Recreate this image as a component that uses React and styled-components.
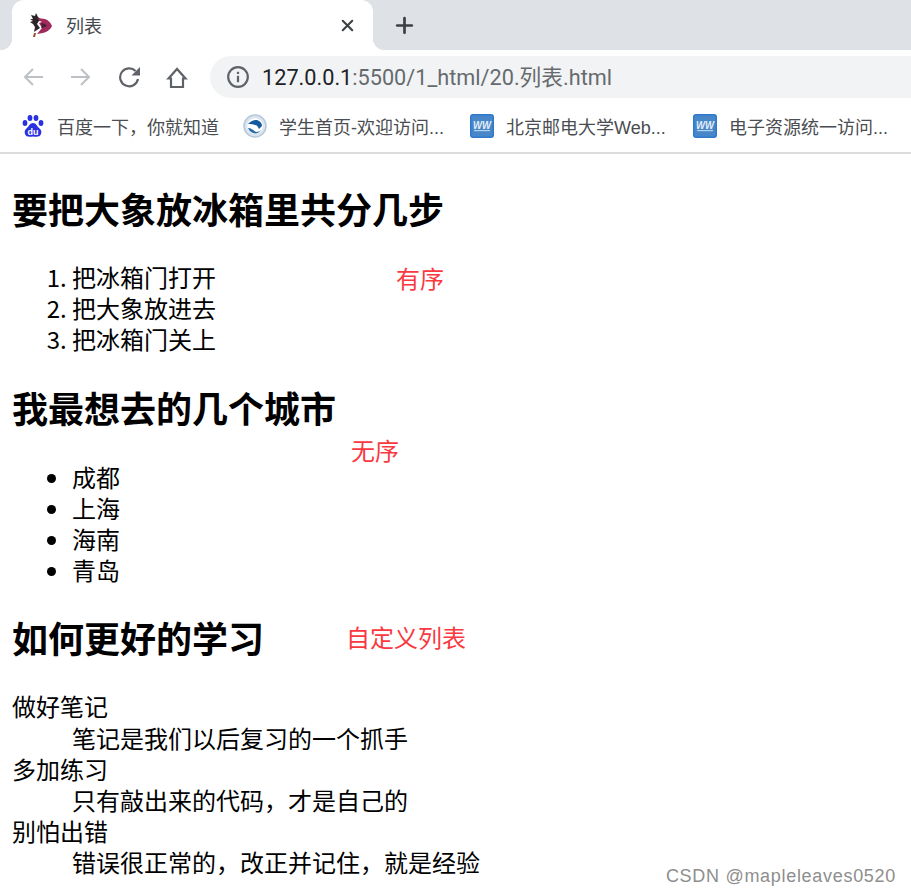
import React from "react";
import styled, { createGlobalStyle } from "styled-components";
import { X, Plus } from "lucide-react";

const Global = createGlobalStyle`
  html, body {
    margin: 0;
    padding: 0;
    background: #fff;
  }
  body {
    font-family: "Liberation Sans", "Noto Sans CJK SC", sans-serif;
    overflow: hidden;
  }
`;

const Page = styled.div`
  width: 911px;
  height: 895px;
  position: relative;
  overflow: hidden;
`;

const TabStrip = styled.div`
  height: 50px;
  background: #dee1e6;
  display: flex;
  align-items: flex-end;
  padding-left: 12px;
`;

const Tab = styled.div`
  width: 361px;
  height: 50px;
  background: #fff;
  border-radius: 12px 12px 0 0;
  display: flex;
  align-items: center;
  padding: 0 16px 0 18px;
  box-sizing: border-box;
  position: relative;
  color: #3c4043;
  &::before, &::after {
    content: "";
    position: absolute;
    bottom: 0;
    width: 12px;
    height: 12px;
  }
  &::before {
    left: -12px;
    background: radial-gradient(circle at 0 0, #dee1e6 12px, #fff 12.5px);
  }
  &::after {
    right: -12px;
    background: radial-gradient(circle at 100% 0, #dee1e6 12px, #fff 12.5px);
  }
`;

const TabTitle = styled.span`
  font-size: 18px;
  margin-left: 14px;
  flex: 1;
  color: #45494d;
`;

const NewTab = styled.div`
  margin-left: 19px;
  height: 50px;
  display: flex;
  align-items: center;
  color: #3c4043;
`;

const Toolbar = styled.div`
  height: 54px;
  display: flex;
  align-items: center;
  padding-left: 21px;
  box-sizing: border-box;
  background: #fff;
`;

const NavButton = styled.div`
  width: 24px;
  height: 24px;
  margin-right: ${(p) => p.$gap}px;
  display: flex;
  align-items: center;
  justify-content: center;
  color: ${(p) => (p.$off ? "#bdc1c6" : "#5f6368")};
`;

const Omnibox = styled.div`
  flex: 1;
  height: 42px;
  background: #f1f3f4;
  border-radius: 21px 0 0 21px;
  display: flex;
  align-items: center;
  padding-left: 17px;
  color: #5f6368;
`;

const Url = styled.div`
  margin-left: 13px;
  padding-bottom: 3px;
  font-family: "Roboto", "Noto Sans CJK SC", sans-serif;
  font-size: 21.7px;
  color: #666a6e;
  b {
    font-weight: 400;
    color: #202124;
  }
`;

const Bookmarks = styled.div`
  height: 50px;
  display: flex;
  align-items: center;
  padding: 0 0 4px 22px;
  box-sizing: border-box;
  border-bottom: 2px solid #dcdcdc;
`;

const Bookmark = styled.div`
  width: ${(p) => p.$w}px;
  display: flex;
  align-items: center;
  flex-shrink: 0;
  font-size: 18px;
  color: #4a4d51;
  white-space: nowrap;
  span {
    margin-left: ${(p) => p.$text}px;
  }
`;

const Content = styled.main`
  padding: 0 12px;
  color: #000;
  font-family: "Noto Sans CJK SC", sans-serif;
  font-size: 24px;
  line-height: 31.2px;
`;

const Heading = styled.h1`
  font-size: 36px;
  font-weight: 700;
  line-height: 48px;
  margin: 0;
  padding-top: ${(p) => p.$top}px;
`;

const OrderedList = styled.ol`
  margin: 29px 0 0;
  padding-left: 60px;
`;

const BulletList = styled.ul`
  margin: 30px 0 0;
  padding-left: 60px;
`;

const DefinitionList = styled.dl`
  margin: 29px 0 0;
`;

const Term = styled.dt``;

const Detail = styled.dd`
  margin-left: 60px;
`;

const Note = styled.div`
  position: absolute;
  left: ${(p) => p.$x}px;
  top: ${(p) => p.$y}px;
  color: #f9393f;
  font-family: "Noto Sans CJK SC", sans-serif;
  font-size: 24px;
  line-height: 32px;
`;

const Watermark = styled.div`
  position: absolute;
  right: 15px;
  top: 866px;
  font-family: "Liberation Sans", sans-serif;
  font-size: 18px;
  line-height: 20px;
  color: #8e8e8e;
  letter-spacing: 0.7px;
`;

function TabLogo() {
  return (
    <svg width="22" height="24" viewBox="0 0 22 24">
      <path d="M1 2l4 1 1-3 2 4 4 3-3 1-2 3 3 4-6 4 1-5-2-3-3-2 3-1-3-2 3 0z" fill="#2b2327" />
      <path d="M7 5l8 1c3 1 6 4 7 7-1 3-5 6-9 7l-6 1 5-6-3-5 3-1-2-1z" fill="#a02a5c" />
      <path d="M11 10c2 0 5 1 6 3-2 1-4 2-6 2l1-2z" fill="#4a1f3a" />
      <path d="M4 20l2 0-1 4-2 0z" fill="#9a4a28" />
    </svg>
  );
}

function BackArrow() {
  return (
    <svg width="20" height="18" viewBox="0 0 20 18" fill="none" stroke="currentColor" strokeWidth="2">
      <path d="M20 9H2M10 1L2 9l8 8" />
    </svg>
  );
}

function ForwardArrow() {
  return (
    <svg width="20" height="18" viewBox="0 0 20 18" fill="none" stroke="currentColor" strokeWidth="2">
      <path d="M0 9h18M10 1l8 8-8 8" />
    </svg>
  );
}

function ReloadIcon() {
  return (
    <svg width="22" height="22" viewBox="0 0 22 22">
      <path d="M17.600 5A9 9 0 1 0 20 13" fill="none" stroke="currentColor" strokeWidth="2.200" />
      <path d="M13.500 9.500H22V1z" fill="currentColor" />
    </svg>
  );
}

function HomeIcon() {
  return (
    <svg width="22" height="21" viewBox="0 0 22 21" fill="none" stroke="currentColor" strokeWidth="2.2">
      <path d="M2.500 11.500L11 2l8.500 9.500H17V20H5v-8.500z" />
    </svg>
  );
}

function InfoIcon() {
  return (
    <svg width="22" height="22" viewBox="0 0 22 22">
      <circle cx="11" cy="11" r="9.800" fill="none" stroke="currentColor" strokeWidth="2.200" />
      <rect x="9.900" y="9.800" width="2.200" height="6.400" fill="currentColor" />
      <rect x="9.900" y="5.800" width="2.200" height="2.200" fill="currentColor" />
    </svg>
  );
}

function BaiduIcon() {
  return (
    <svg width="22" height="24" viewBox="0 0 22 24">
      <g fill="#2932e1">
        <ellipse cx="3" cy="9" rx="2.400" ry="3" />
        <ellipse cx="8" cy="4" rx="2.400" ry="3" />
        <ellipse cx="14" cy="4" rx="2.400" ry="3" />
        <ellipse cx="19" cy="9" rx="2.400" ry="3" />
        <path d="M11 9c3 0 4 3 6 5s3 3 2 6-4 3-8 2.500c-4 .5-7 .5-8-2.500s0-4 2-6 3-5 6-5z" />
      </g>
      <text x="11" y="20.500" textAnchor="middle" fontSize="9" fontWeight="700" fill="#fff" fontFamily="Liberation Sans">du</text>
    </svg>
  );
}

function SchoolIcon() {
  return (
    <svg width="24" height="24" viewBox="0 0 24 24">
      <circle cx="12" cy="12" r="11" fill="#dbe5ef" stroke="#b5c8dc" strokeWidth="1.500" />
      <circle cx="12" cy="12" r="7.800" fill="#fff" />
      <path d="M5 10c3-3 6-4 9-4 3 1 5 3 5 6l-3 3c-1-2-2-4-4-4-2-1-4-1-7-1z" fill="#16599f" />
      <path d="M5 14c3 0 5 2 8 4 2 0 4-1 5-2-2 3-5 4-8 3-3-1-4-3-5-5z" fill="#2d6da9" />
    </svg>
  );
}

function WebIcon() {
  return (
    <svg width="24" height="24" viewBox="0 0 24 24">
      <rect width="24" height="24" rx="3" fill="#2f78cc" />
      <rect x="1.500" y="1.500" width="21" height="21" rx="1.500" fill="#4787c9" />
      <text x="12" y="15" textAnchor="middle" fontSize="11" fontWeight="700" fontStyle="italic" fill="#e4eef8" fontFamily="Liberation Sans" textLength="18" lengthAdjust="spacingAndGlyphs">WW</text>
      <rect x="4" y="16" width="16" height="1.200" fill="#b4d0ea" />
    </svg>
  );
}

const steps = ["把冰箱门打开", "把大象放进去", "把冰箱门关上"];
const cities = ["成都", "上海", "海南", "青岛"];
const tips = [
  ["做好笔记", "笔记是我们以后复习的一个抓手"],
  ["多加练习", "只有敲出来的代码，才是自己的"],
  ["别怕出错", "错误很正常的，改正并记住，就是经验"],
];

export default function App() {
  return (
    <Page>
      <Global />
      <TabStrip>
        <Tab>
          <TabLogo />
          <TabTitle>列表</TabTitle>
          <X size={19} strokeWidth={2.6} />
        </Tab>
        <NewTab>
          <Plus size={25} strokeWidth={2.6} />
        </NewTab>
      </TabStrip>
      <Toolbar>
        <NavButton $off $gap={24}>
          <BackArrow />
        </NavButton>
        <NavButton $off $gap={24}>
          <ForwardArrow />
        </NavButton>
        <NavButton $gap={24}>
          <ReloadIcon />
        </NavButton>
        <NavButton $gap={21}>
          <HomeIcon />
        </NavButton>
        <Omnibox>
          <InfoIcon />
          <Url>
            <b>127.0.0.1</b>:5500/1_html/20.列表.html
          </Url>
        </Omnibox>
      </Toolbar>
      <Bookmarks>
        <Bookmark $w={221} $text={13}>
          <BaiduIcon />
          <span>百度一下，你就知道</span>
        </Bookmark>
        <Bookmark $w={227} $text={12}>
          <SchoolIcon />
          <span>学生首页-欢迎访问...</span>
        </Bookmark>
        <Bookmark $w={223} $text={12}>
          <WebIcon />
          <span>北京邮电大学Web...</span>
        </Bookmark>
        <Bookmark $w={215} $text={12}>
          <WebIcon />
          <span>电子资源统一访问...</span>
        </Bookmark>
      </Bookmarks>
      <Content>
        <Heading $top={30}>要把大象放冰箱里共分几步</Heading>
        <OrderedList>
          {steps.map((s) => (
            <li key={s}>{s}</li>
          ))}
        </OrderedList>
        <Heading $top={28}>我最想去的几个城市</Heading>
        <BulletList>
          {cities.map((c) => (
            <li key={c}>{c}</li>
          ))}
        </BulletList>
        <Heading $top={28}>如何更好的学习</Heading>
        <DefinitionList>
          {tips.map(([t, d]) => (
            <React.Fragment key={t}>
              <Term>{t}</Term>
              <Detail>{d}</Detail>
            </React.Fragment>
          ))}
        </DefinitionList>
      </Content>
      <Note $x={396} $y={262}>有序</Note>
      <Note $x={351} $y={434}>无序</Note>
      <Note $x={346} $y={621}>自定义列表</Note>
      <Watermark>CSDN @mapleleaves0520</Watermark>
    </Page>
  );
}
